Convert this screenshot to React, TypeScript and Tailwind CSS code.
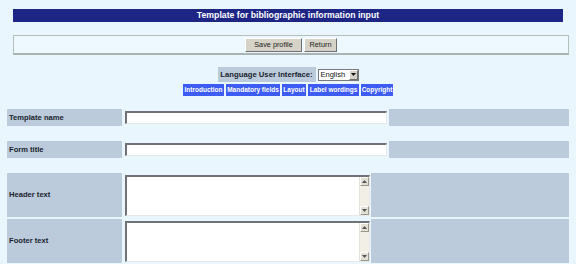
import React from "react";

const font = { fontFamily: '"Liberation Sans", Arial, sans-serif' };

function Btn({ label, w }: { label: string; w: string }) {
  return (
    <div
      className={`${w} h-[14px] bg-[#d6d2c8] border border-t-white border-l-white border-r-[#6f6f6f] border-b-[#6f6f6f] flex items-center justify-center text-[7.3px] text-[#222] leading-none`}
    >
      {label}
    </div>
  );
}

function Tab({ label, w }: { label: string; w: string }) {
  return (
    <div
      className={`${w} h-[12px] bg-[#3d5cf4] flex items-center justify-center text-white font-bold text-[6.5px] leading-none whitespace-nowrap overflow-hidden`}
    >
      {label}
    </div>
  );
}

function Scrollbar() {
  return (
    <div className="w-[10px] h-full flex flex-col justify-between bg-[#f1efe6] border-l border-[#e4e2da]">
      <div className="w-[9px] h-[9px] bg-[#e2dfd4] border border-t-white border-l-white border-r-[#9a978c] border-b-[#9a978c] flex items-center justify-center">
        <svg width="5" height="3" viewBox="0 0 5 3"><path d="M0 3 L2.5 0 L5 3 Z" fill="#555" /></svg>
      </div>
      <div className="w-[9px] h-[9px] bg-[#e2dfd4] border border-t-white border-l-white border-r-[#9a978c] border-b-[#9a978c] flex items-center justify-center">
        <svg width="5" height="3" viewBox="0 0 5 3"><path d="M0 0 L2.5 3 L5 0 Z" fill="#555" /></svg>
      </div>
    </div>
  );
}

function InputRow({ label }: { label: string }) {
  return (
    <div className="flex h-[17px] gap-[2px]">
      <div className="w-[115px] bg-[#bccbdc] flex items-center pl-[2px] text-[7.6px] font-bold text-[#1a1f2e]">
        {label}
      </div>
      <div className="w-[263px] flex items-center pl-[1px]">
        <div className="w-[262px] h-[13px] bg-white border-t-2 border-l-2 border-t-[#6f7378] border-l-[#6f7378] border-b border-r border-b-[#e8e8e8] border-r-[#e8e8e8]" />
      </div>
      <div className="flex-1 bg-[#bccbdc]" />
    </div>
  );
}

function AreaRow({ label }: { label: string }) {
  return (
    <div className="flex h-[44px] gap-[1px]">
      <div className="w-[115px] bg-[#bccbdc] flex items-center pl-[2px] text-[7.6px] font-bold text-[#1a1f2e]">
        {label}
      </div>
      <div className="w-[247px] flex items-center pl-[2px]">
        <div className="w-[245px] h-[41px] bg-white border-t-2 border-l-2 border-t-[#6f7378] border-l-[#6f7378] border-b border-r border-b-[#e8e8e8] border-r-[#e8e8e8] flex justify-end">
          <Scrollbar />
        </div>
      </div>
      <div className="flex-1 bg-[#bccbdc]" />
    </div>
  );
}

export default function App() {
  return (
    <div style={font} className="w-[576px] h-[264px] bg-[#eaf6fd] overflow-hidden pl-[7px] pr-[7px]">
      <div className="mx-[6px] mt-[9px] h-[13px] bg-[#1d2685] flex items-center justify-center text-white font-bold text-[8.7px] leading-none">
        Template for bibliographic information input
      </div>
      <div className="ml-[6px] mr-[0px] mt-[13px] h-[20px] bg-[#eef8ff] border border-[#b4bcbc] border-b-2 border-b-[#a9b4b4] flex items-center justify-center gap-[2px]">
        <Btn label="Save profile" w="w-[57px]" />
        <Btn label="Return" w="w-[33px]" />
      </div>
      <div className="flex justify-center mt-[12px] h-[15px]">
        <div className="flex items-center gap-[2px]">
          <div className="h-[15px] w-[98px] bg-[#bccbdc] flex items-center justify-center text-[7.7px] font-bold text-[#1a1f2e] whitespace-nowrap">
            Language User Interface:
          </div>
          <div className="w-[41px] h-[12px] bg-white border border-[#7a7a7a] flex items-center justify-between pl-[2px]">
            <span className="text-[7.5px] text-[#111] leading-none">English</span>
            <div className="w-[9px] h-[10px] bg-[#d6d2c8] border border-t-white border-l-white border-r-[#6f6f6f] border-b-[#6f6f6f] flex items-center justify-center">
              <svg width="5" height="3" viewBox="0 0 5 3"><path d="M0 0 L2.5 3 L5 0 Z" fill="#111" /></svg>
            </div>
          </div>
        </div>
      </div>
      <div className="flex justify-center mt-[2px] gap-[2px]">
        <Tab label="Introduction" w="w-[41px]" />
        <Tab label="Mandatory fields" w="w-[54px]" />
        <Tab label="Layout" w="w-[24px]" />
        <Tab label="Label wordings" w="w-[51px]" />
        <Tab label="Copyright" w="w-[32px]" />
      </div>
      <div className="mt-[13px] flex flex-col">
        <InputRow label="Template name" />
        <div className="h-[15px]" />
        <InputRow label="Form title" />
        <div className="h-[15px]" />
        <div className="flex flex-col gap-[2px]">
          <AreaRow label="Header text" />
          <AreaRow label="Footer text" />
        </div>
      </div>
    </div>
  );
}
